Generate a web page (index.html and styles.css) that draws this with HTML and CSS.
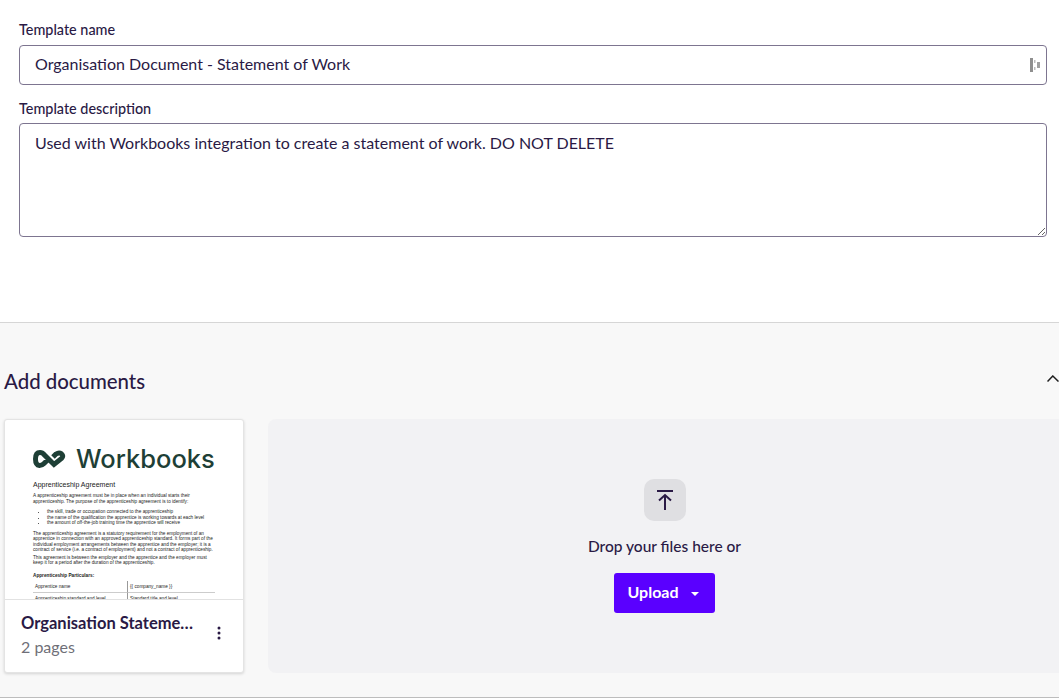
FILE: index.html
```html
<!DOCTYPE html>
<html lang="en">
<head>
    <meta charset="UTF-8">
    <meta name="viewport" content="width=device-width, initial-scale=1.0">
    <title>Template details</title>
    <link rel="stylesheet" href="styles.css">
</head>
<body>
    <form class="details">
        <label class="field-label" for="templateName">Template name</label>
        <div class="name-wrap">
            <input class="field-input" id="templateName" type="text" value="Organisation Document - Statement of Work">
            <svg class="field-icon" width="12" height="16" viewBox="0 0 12 16">
                <path d="M1 1h3v14H1z" fill="#8f8f8f"/>
                <path d="M5 3h1.500v3H5zM5 10h1.500v3H5z" fill="#bdbdbd"/>
                <path d="M8 5h3v6H8z" fill="#a0a0a0"/>
            </svg>
        </div>
        <label class="field-label desc-label" for="templateDesc">Template description</label>
        <textarea class="field-input field-area" id="templateDesc">Used with Workbooks integration to create a statement of work. DO NOT DELETE</textarea>
    </form>

    <section class="documents">
        <div class="documents-head">
            <h2>Add documents</h2>
            <svg class="chevron" width="12" height="7" viewBox="0 0 12 7">
                <path d="M.5 6.500L5.800 1 11.500 6.500" fill="none" stroke="#1f1f1f" stroke-width="1.500"/>
            </svg>
        </div>
        <div class="documents-body">
            <article class="doc-card">
                <div class="doc-thumb">
                    <div class="doc-logo">
                        <svg width="33" height="18" viewBox="0 0 33 18">
                            <path d="M14 10.500L11 13.500Q9 15.500 6.500 15.500Q2.500 15 2.500 9Q2.500 2.500 7 2.500Q9.500 2.500 11 4.500L21 14.500L28.500 8.500Q31 6 28.500 3.800Q26 2 23 4L20 7" fill="none" stroke="#1e3f36" stroke-width="5"/>
                        </svg>
                        <span>Workbooks</span>
                    </div>
                    <h4>Apprenticeship Agreement</h4>
                    <p>A apprenticeship agreement must be in place when an individual starts their apprenticeship. The purpose of the apprenticeship agreement is to identify:</p>
                    <ul>
                        <li>the skill, trade or occupation connected to the apprenticeship</li>
                        <li>the name of the qualification the apprentice is working towards at each level</li>
                        <li>the amount of off-the-job training time the apprentice will receive</li>
                    </ul>
                    <p>The apprenticeship agreement is a statutory requirement for the employment of an apprentice in connection with an approved apprenticeship standard. It forms part of the individual employment arrangements between the apprentice and the employer; it is a contract of service (i.e. a contract of employment) and not a contract of apprenticeship.</p>
                    <p>This agreement is between the employer and the apprentice and the employer must keep it for a period after the duration of the apprenticeship.</p>
                    <h5>Apprenticeship Particulars:</h5>
                    <div class="doc-table">
                        <span>Apprentice name</span>
                        <span>{{ company_name }}</span>
                        <span>Apprenticeship standard and level</span>
                        <span>Standard title and level</span>
                    </div>
                </div>
                <div class="doc-footer">
                    <div class="doc-info">
                        <div class="doc-title">Organisation Statement of Work</div>
                        <div class="doc-pages">2 pages</div>
                    </div>
                    <svg class="doc-menu" width="4" height="14" viewBox="0 0 4 14">
                        <circle cx="2" cy="2" r="1.500"/>
                        <circle cx="2" cy="7" r="1.500"/>
                        <circle cx="2" cy="12" r="1.500"/>
                    </svg>
                </div>
            </article>
            <div class="dropzone">
                <div class="drop-icon">
                    <svg width="18" height="22" viewBox="0 0 18 22">
                        <path d="M1 2h16M9 21V6M3 11.500L9 6l6 5.500" fill="none" stroke="#2a1a45" stroke-width="2"/>
                    </svg>
                </div>
                <p class="drop-text">Drop your files here or</p>
                <button type="button" class="upload-btn">Upload <span class="caret"></span></button>
            </div>
        </div>
    </section>
</body>
</html>
```

FILE: styles.css
```css
* {
    box-sizing: border-box;
}
body {
    margin: 0;
    height: 699px;
    overflow: hidden;
    background: white;
    color: #2a1a45;
    font-family: Lato, 'Noto Sans', sans-serif;
}
.details {
    height: 323px;
    padding: 21px 12px 0 19px;
    border-bottom: 1px solid #d6d6d6;
}
.field-label {
    display: block;
    font-size: 14.400px;
    font-weight: 500;
    line-height: 18px;
    margin-bottom: 6px;
}
.desc-label {
    margin-top: 15px;
    margin-bottom: 5px;
}
.name-wrap {
    position: relative;
}
.field-input {
    display: block;
    width: 100%;
    height: 40px;
    padding: 0 15px 3px;
    border: 1px solid #7d7590;
    border-radius: 4px;
    background: white;
    color: #2a1a45;
    font-family: inherit;
    font-size: 16px;
}
.field-area {
    height: 114px;
    padding: 9px 15px;
    line-height: 20px;
    resize: vertical;
}
.field-icon {
    position: absolute;
    right: 6px;
    top: 12px;
}
.documents {
    height: 375px;
    background: #f8f8f8;
    border-bottom: 1px solid #bdbdbd;
    padding-left: 4px;
}
.documents-head {
    display: flex;
    justify-content: space-between;
    align-items: center;
    height: 96px;
    padding-top: 19px;
}
.documents-head h2 {
    margin: 0;
    font-size: 20.400px;
    font-weight: 500;
}
.chevron {
    margin-top: -4px;
}
.documents-body {
    display: flex;
    gap: 24px;
    align-items: flex-start;
}
.doc-card {
    width: 240px;
    height: 254px;
    background: white;
    border: 1px solid #e4e4e4;
    border-radius: 3px;
    box-shadow: 0 1px 3px rgba(0,0,0,0.15);
    overflow: hidden;
}
.doc-thumb {
    height: 180px;
    padding: 30px 28px 0;
    overflow: hidden;
    border-bottom: 1px solid #e2e2e2;
    color: #222;
    font-family: 'Liberation Sans', sans-serif;
    font-size: 4.700px;
    line-height: 5.500px;
}
.doc-logo {
    display: flex;
    align-items: center;
    gap: 10px;
    height: 18px;
    color: #1e3f36;
    font-family: Inter, sans-serif;
    font-size: 25.500px;
    font-weight: 500;
    line-height: 18px;
}
.doc-thumb h4 {
    margin: 12px 0 4px;
    font-size: 7px;
    line-height: 9px;
    font-weight: normal;
}
.doc-thumb p {
    margin: 0 0 2px;
}
.doc-thumb ul {
    margin: 5px 0;
    padding-left: 14px;
}
.doc-thumb h5 {
    margin: 7px 0 2px;
    font-size: 4.700px;
    line-height: 6px;
}
.doc-table {
    display: grid;
    grid-template-columns: 94px 1fr;
    grid-auto-rows: 12px;
    align-items: center;
}
.doc-table span {
    white-space: nowrap;
    overflow: hidden;
    height: 12px;
    line-height: 12px;
    padding-left: 2px;
    border-bottom: 1px solid #ccc;
}
.doc-table span:nth-child(even) {
    border-left: 1px solid #999;
}
.doc-footer {
    display: flex;
    align-items: flex-start;
    justify-content: space-between;
    height: 73px;
    padding: 12px 22px 0 16px;
}
.doc-info {
    width: 176px;
}
.doc-title {
    font-size: 16.500px;
    font-weight: 700;
    line-height: 22px;
    white-space: nowrap;
    overflow: hidden;
    text-overflow: ellipsis;
}
.doc-pages {
    margin-top: 3px;
    color: #6f6f78;
    font-size: 16px;
    line-height: 20px;
}
.doc-menu {
    fill: #2a1a45;
    margin-top: 14px;
}
.dropzone {
    flex: 1;
    height: 254px;
    display: flex;
    flex-direction: column;
    align-items: center;
    background: #f2f2f4;
    border-radius: 8px 0 0 8px;
    padding: 60px 0 0 2px;
}
.drop-icon {
    display: flex;
    align-items: center;
    justify-content: center;
    width: 42px;
    height: 42px;
    background: #dfdfe2;
    border-radius: 10px;
}
.drop-text {
    margin: 15px 0 16px;
    font-size: 15.500px;
    font-weight: 500;
    line-height: 21px;
}
.upload-btn {
    display: flex;
    align-items: center;
    gap: 12px;
    height: 40px;
    padding: 0 16px 3px 13px;
    border: none;
    border-radius: 3px;
    background: #5a00ff;
    color: white;
    font-family: inherit;
    font-size: 16px;
    font-weight: 700;
    cursor: pointer;
}
.caret {
    width: 0;
    height: 0;
    margin-top: 4px;
    border-left: 4px solid transparent;
    border-right: 4px solid transparent;
    border-top: 4px solid white;
}
```
